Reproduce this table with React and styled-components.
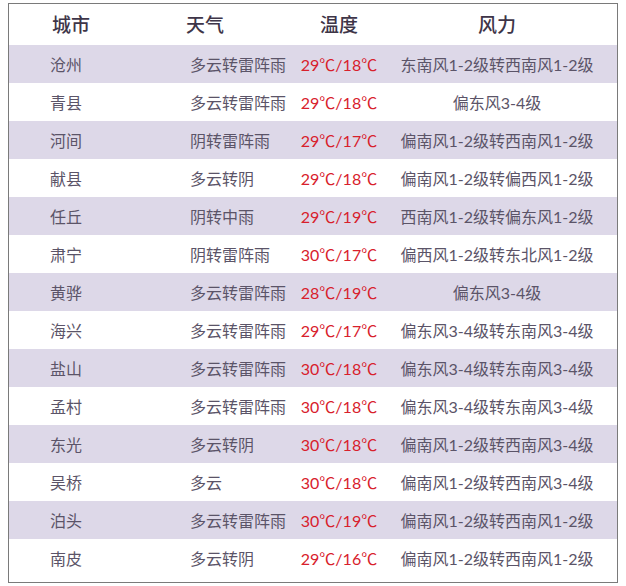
import styled, { createGlobalStyle } from "styled-components";

const GlobalStyle = createGlobalStyle`
  html, body {
    margin: 0;
    padding: 0;
    background: #ffffff;
  }
`;

const rows = [
  ["沧州", "多云转雷阵雨", "29℃/18℃", "东南风1-2级转西南风1-2级"],
  ["青县", "多云转雷阵雨", "29℃/18℃", "偏东风3-4级"],
  ["河间", "阴转雷阵雨", "29℃/17℃", "偏南风1-2级转西南风1-2级"],
  ["献县", "多云转阴", "29℃/18℃", "偏南风1-2级转偏西风1-2级"],
  ["任丘", "阴转中雨", "29℃/19℃", "西南风1-2级转偏东风1-2级"],
  ["肃宁", "阴转雷阵雨", "30℃/17℃", "偏西风1-2级转东北风1-2级"],
  ["黄骅", "多云转雷阵雨", "28℃/19℃", "偏东风3-4级"],
  ["海兴", "多云转雷阵雨", "29℃/17℃", "偏东风3-4级转东南风3-4级"],
  ["盐山", "多云转雷阵雨", "30℃/18℃", "偏东风3-4级转东南风3-4级"],
  ["孟村", "多云转雷阵雨", "30℃/18℃", "偏东风3-4级转东南风3-4级"],
  ["东光", "多云转阴", "30℃/18℃", "偏南风1-2级转西南风3-4级"],
  ["吴桥", "多云", "30℃/18℃", "偏南风1-2级转西南风3-4级"],
  ["泊头", "多云转雷阵雨", "30℃/19℃", "偏南风1-2级转西南风1-2级"],
  ["南皮", "多云转阴", "29℃/16℃", "偏南风1-2级转西南风1-2级"],
];

const Frame = styled.div`
  margin: 3px 0 0 8px;
  width: 610px;
  height: 580px;
  border: 1px solid #7a7a7a;
  box-sizing: border-box;
  background: #ffffff;
  font-family: "Lato", "Noto Sans CJK SC", sans-serif;
`;

const Row = styled.div`
  display: grid;
  grid-template-columns: 171px 116px 86px 230px;
  align-items: center;
  height: ${(p) => (p.$header ? "41px" : "38px")};
  background: ${(p) => (p.$shaded ? "#ddd8e8" : "#ffffff")};
`;

const HeadCell = styled.div`
  font-size: 19px;
  font-weight: 500;
  color: #3e3548;
  padding-left: ${(p) => p.$pad || "0"};
  padding-bottom: 2px;
  text-align: ${(p) => (p.$center ? "center" : "left")};
  font-family: "Noto Sans CJK SC", sans-serif;
`;

const Cell = styled.div`
  font-size: 16px;
  color: ${(p) => (p.$hot ? "#d8202c" : "#5b5468")};
  padding-left: ${(p) => p.$pad || "0"};
  text-align: ${(p) => (p.$center ? "center" : "left")};
  white-space: nowrap;
`;

export default function App() {
  return (
    <>
      <GlobalStyle />
      <Frame>
        <Row $header>
          <HeadCell $pad="43px">城市</HeadCell>
          <HeadCell $pad="6px">天气</HeadCell>
          <HeadCell $center>温度</HeadCell>
          <HeadCell $center>风力</HeadCell>
        </Row>
        {rows.map((r, i) => (
          <Row key={r[0]} $shaded={i % 2 === 0}>
            <Cell $pad="41px">{r[0]}</Cell>
            <Cell $pad="10px">{r[1]}</Cell>
            <Cell $hot $center>{r[2]}</Cell>
            <Cell $center>{r[3]}</Cell>
          </Row>
        ))}
      </Frame>
    </>
  );
}
